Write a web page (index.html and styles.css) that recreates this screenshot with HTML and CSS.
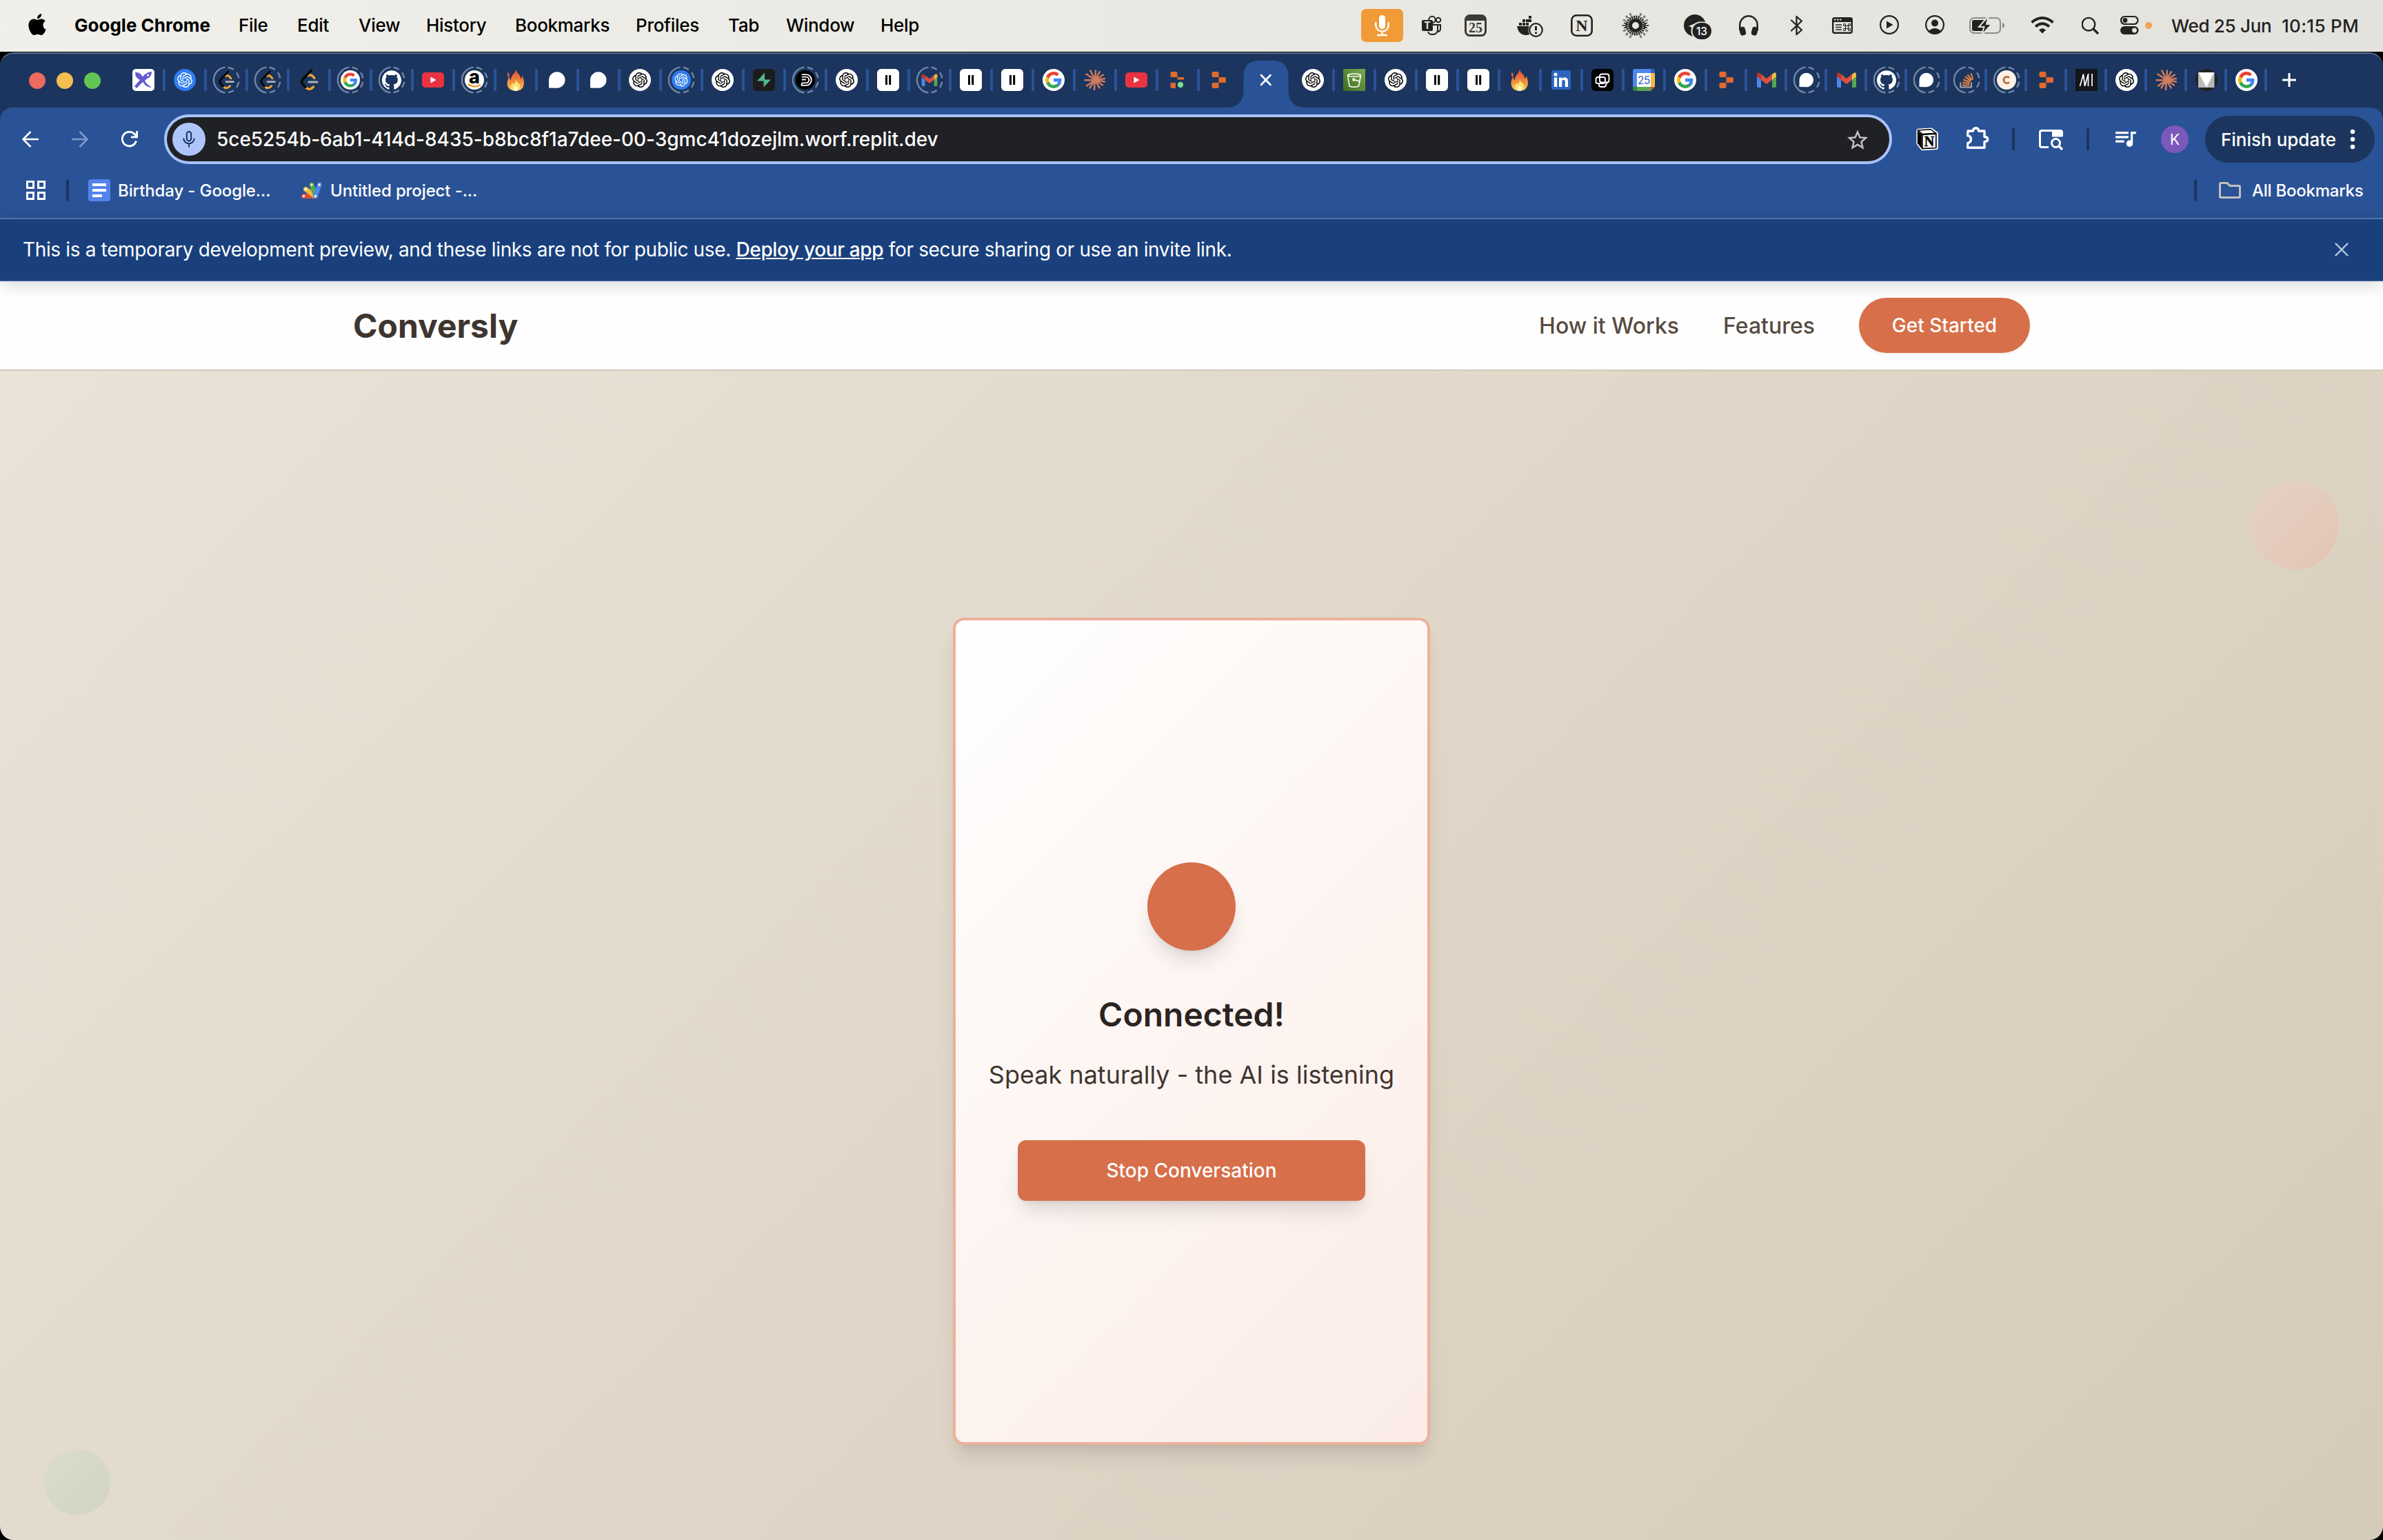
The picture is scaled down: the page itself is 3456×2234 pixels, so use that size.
FILE: index.html
```html
<!DOCTYPE html>
<html lang="en">
<head>
<meta charset="utf-8">
<title>Conversly</title>
<link rel="stylesheet" href="styles.css">
</head>
<body>
<svg class="sprite" width="0" height="0">
  <defs>
    <linearGradient id="flameFill" x1="0" y1="0" x2="0" y2="1"><stop offset="0" stop-color="#e2472e"/><stop offset=".55" stop-color="#ef8a3d"/><stop offset="1" stop-color="#fbd34f"/></linearGradient>
    <linearGradient id="bucketFill" x1="0" y1="1" x2="1" y2="0"><stop offset="0" stop-color="#3a6b22"/><stop offset="1" stop-color="#7aab4c"/></linearGradient>
  </defs>
  <symbol id="knot" viewBox="0 0 24 24"><path d="M22.2819 9.8211a5.9847 5.9847 0 0 0-.5157-4.9108 6.0462 6.0462 0 0 0-6.5098-2.9A6.0651 6.0651 0 0 0 4.9807 4.1818a5.9847 5.9847 0 0 0-3.9977 2.9 6.0462 6.0462 0 0 0 .7427 7.0966 5.98 5.98 0 0 0 .511 4.9107 6.051 6.051 0 0 0 6.5146 2.9001A5.9847 5.9847 0 0 0 13.2599 24a6.0557 6.0557 0 0 0 5.7718-4.2058 5.9894 5.9894 0 0 0 3.9977-2.9001 6.0557 6.0557 0 0 0-.7475-7.0729zm-9.022 12.6081a4.4755 4.4755 0 0 1-2.8764-1.0408l.1419-.0804 4.7783-2.7582a.7948.7948 0 0 0 .3927-.6813v-6.7369l2.02 1.1686a.071.071 0 0 1 .038.052v5.5826a4.504 4.504 0 0 1-4.4945 4.4944zm-9.6607-4.1254a4.4708 4.4708 0 0 1-.5346-3.0137l.142.0852 4.783 2.7582a.7712.7712 0 0 0 .7806 0l5.8428-3.3685v2.3324a.0804.0804 0 0 1-.0332.0615L9.74 19.9502a4.4992 4.4992 0 0 1-6.1408-1.6464zM2.3408 7.8956a4.485 4.485 0 0 1 2.3655-1.9728V11.6a.7664.7664 0 0 0 .3879.6765l5.8144 3.3543-2.0201 1.1685a.0757.0757 0 0 1-.071 0l-4.8303-2.7865A4.504 4.504 0 0 1 2.3408 7.872zm16.5963 3.8558L13.1038 8.364 15.1192 7.2a.0757.0757 0 0 1 .071 0l4.8303 2.7913a4.4944 4.4944 0 0 1-.6765 8.1042v-5.6772a.79.79 0 0 0-.407-.667zm2.0107-3.0231l-.142-.0852-4.7735-2.7818a.7759.7759 0 0 0-.7854 0L9.409 9.2297V6.8974a.0662.0662 0 0 1 .0284-.0615l4.8303-2.7866a4.4992 4.4992 0 0 1 6.6802 4.66zM8.3065 12.863l-2.02-1.1638a.0804.0804 0 0 1-.038-.0567V6.0742a4.4992 4.4992 0 0 1 7.3757-3.4537l-.142.0805L8.704 5.459a.7948.7948 0 0 0-.3927.6813zm1.0976-2.3654l2.602-1.4998 2.6069 1.4998v2.9994l-2.5974 1.4997-2.6067-1.4997Z"/></symbol>
  <symbol id="gpt" viewBox="0 0 32 32"><circle cx="16" cy="16" r="16" fill="#fff"/><use href="#knot" x="5" y="5" width="22" height="22" fill="#000"/></symbol>
  <symbol id="gptblue" viewBox="0 0 32 32"><circle cx="16" cy="16" r="16" fill="#2f7df0"/><use href="#knot" x="5" y="5" width="22" height="22" fill="#fff"/></symbol>
  <symbol id="ring" viewBox="0 0 40 40"><g fill="none" stroke="#6f86a8" stroke-width="2.4"><path d="M18.5 1.6A18.5 18.5 0 0 0 18.5 38.4"/><path pathLength="180" stroke-dasharray="0 9 27 18 27 18 27 18 27 9" d="M20 1.5A18.5 18.5 0 0 1 20 38.5"/></g></symbol>
  <symbol id="xlogo" viewBox="0 0 32 32"><rect width="32" height="32" rx="5" fill="#fff"/><path d="M4 5q8-1 11 7l2 5-11 11-3-3 8-9Q4 13 4 5zM28 4q0 8-8 11l-2 2q1 4 10 10-8 0-12-7l-3-5q1-4 5-7 5-4 10-4z" fill="#635bcf"/><circle cx="22.500" cy="9" r="1.500" fill="#fff"/></symbol>
  <symbol id="leet" viewBox="0 0 32 32"><path d="M15.500 9.500q3-2 6 1l2.500 2.800M11 26.500q5.500 6 11.500-.500" fill="none" stroke="#f0a32f" stroke-width="3.400" stroke-linecap="round"/><path d="M19.500 2 7.500 14.500q-4 4 0 8l3.500 3.800" fill="none" stroke="#080808" stroke-width="3.400" stroke-linecap="round"/><path d="M16 19H28" stroke="#b3b1b0" stroke-width="3.200" stroke-linecap="round"/></symbol>
  <symbol id="g" viewBox="0 0 24 24"><path fill="#4285f4" d="M22.560 12.250c0-.780-.070-1.530-.200-2.250H12v4.260h5.920c-.260 1.370-1.040 2.530-2.210 3.310v2.770h3.570c2.080-1.920 3.280-4.740 3.280-8.090z"/><path fill="#34a853" d="M12 23c2.970 0 5.460-.980 7.280-2.660l-3.570-2.770c-.980.660-2.230 1.060-3.710 1.060-2.860 0-5.290-1.930-6.160-4.530H2.180v2.840C3.990 20.530 7.700 23 12 23z"/><path fill="#fbbc05" d="M5.840 14.090c-.220-.660-.350-1.360-.350-2.090s.130-1.430.350-2.090V7.070H2.180C1.430 8.550 1 10.220 1 12s.430 3.450 1.180 4.930l2.850-2.220.810-.620z"/><path fill="#ea4335" d="M12 5.380c1.620 0 3.060.560 4.210 1.640l3.150-3.150C17.450 2.090 14.970 1 12 1 7.700 1 3.990 3.470 2.180 7.070l3.660 2.840c.870-2.600 3.300-4.530 6.160-4.530z"/></symbol>
  <symbol id="google" viewBox="0 0 32 32"><circle cx="16" cy="16" r="16" fill="#fff"/><use href="#g" x="3" y="3" width="26" height="26"/></symbol>
  <symbol id="github" viewBox="0 0 24 24"><path fill="#fff" d="M12 .297c-6.630 0-12 5.373-12 12 0 5.303 3.438 9.800 8.205 11.385.600.113.820-.258.820-.577 0-.285-.010-1.040-.015-2.040-3.338.724-4.042-1.610-4.042-1.610C4.422 18.070 3.633 17.700 3.633 17.700c-1.087-.744.084-.729.084-.729 1.205.084 1.838 1.236 1.838 1.236 1.070 1.835 2.809 1.305 3.495.998.108-.776.417-1.305.760-1.605-2.665-.300-5.466-1.332-5.466-5.930 0-1.310.465-2.380 1.235-3.220-.135-.303-.540-1.523.105-3.176 0 0 1.005-.322 3.300 1.230.960-.267 1.980-.399 3-.405 1.020.006 2.040.138 3 .405 2.280-1.552 3.285-1.230 3.285-1.230.645 1.653.240 2.873.120 3.176.765.840 1.230 1.910 1.230 3.220 0 4.610-2.805 5.625-5.475 5.920.420.360.810 1.096.810 2.220 0 1.606-.015 2.896-.015 3.286 0 .315.210.690.825.570C20.565 22.092 24 17.592 24 12.297c0-6.627-5.373-12-12-12"/></symbol>
  <symbol id="yt" viewBox="0 0 32 32"><rect y="5" width="32" height="22" rx="5" fill="#ea3340"/><path d="M12.500 11.500v9l8-4.500z" fill="#fff"/></symbol>
  <symbol id="flame" viewBox="0 0 32 32"><path d="M16 .500c1 6 8 8 7 14 2-1 2-3 2-5 5 8 5 22-9 22.500C2 31.500 1 19 7 11c0 3 0 4 2 5 0-7 6-9 7-15.500z" fill="url(#flameFill)"/><path d="M5 4.500q3 4 .500 8-3-4-.500-8z" fill="#e2603c"/><path d="M16 15c1 5 7 6 6 11-1 7-12 7-13 0 0-3 2-4 3-6 1 2 2 2 2 2 1-2 2-4 2-7z" fill="#fbe36f"/><path d="M16 24c5 4 3 8 0 8s-5-4 0-8z" fill="#fffbe0"/></symbol>
  <symbol id="bubble" viewBox="0 0 32 32"><path d="M4 27.500V16a11.750 11.750 0 1 1 11.750 11.750z" fill="#fff"/></symbol>
  <symbol id="supabase" viewBox="0 0 32 32"><rect width="32" height="32" rx="5" fill="#1c1c1e"/><path d="M17 5.500v10h9L15.500 26.500v-9H6z" fill="#4fb98a"/></symbol>
  <symbol id="dlogo" viewBox="0 0 32 32"><circle cx="16" cy="16" r="16" fill="#000"/><path d="M10 7h7a9 9 0 0 1 0 18h-7v-4M10 11h7a5 5 0 0 1 0 10h-7M10 15.500h7" fill="none" stroke="#fff" stroke-width="2.200"/></symbol>
  <symbol id="eleven" viewBox="0 0 32 32"><rect width="32" height="32" rx="6" fill="#fff"/><path d="M12 9h3v14h-3zM17.200 9h3v14h-3z" fill="#000"/></symbol>
  <symbol id="gmail" viewBox="0 0 32 32"><path d="M2 27V9l6 5v13H4q-2 0-2-2z" fill="#4f86ec"/><path d="M30 27V9l-6 5v13h4q2 0 2-2z" fill="#55a754"/><path d="M24 7.500 27 5.500q3-1 3 3V11l-6 5z" fill="#f1bc42"/><path d="M8 7.500l8 6.500 8-6.500V16l-8 6-8-6z" fill="#d9503f"/><path d="M8 7.500 5 5.500q-3-1-3 3V11l6 5z" fill="#b5352c"/></symbol>
  <symbol id="burst" viewBox="0 0 32 32"><g stroke="#cf7c5d" stroke-width="2.500" stroke-linecap="round"><path d="M16 16 9.500 2.500M16 16l1-13.500M16 16l7-12M16 16l12-7.500M16 16l14-2M16 16l14 2.500M16 16l11 7.500M16 16l6.500 11.500M16 16l-1 14M16 16 8.500 27.500M16 16 4 24.500M16 16l-14.500.300M16 16 3.500 7.500"/></g></symbol>
  <symbol id="replit" viewBox="0 0 32 32"><path d="M7.500 4h6a2 2 0 0 1 2 2v6h-8a2 2 0 0 1-2-2V6a2 2 0 0 1 2-2zM15.500 12H24a2 2 0 0 1 2 2v4a2 2 0 0 1-2 2h-8.500zM7.500 20h8v6a2 2 0 0 1-2 2h-6a2 2 0 0 1-2-2v-4a2 2 0 0 1 2-2z" fill="#e06a2c"/></symbol>
  <symbol id="replitlive" viewBox="0 0 32 32"><path d="M7.500 4h6a2 2 0 0 1 2 2v6h-8a2 2 0 0 1-2-2V6a2 2 0 0 1 2-2zM15.500 12H25v3.500h-9.500zM7.500 20h5.500v8H7.500a2 2 0 0 1-2-2v-4a2 2 0 0 1 2-2z" fill="#e06a2c"/><circle cx="20" cy="23" r="4.200" fill="#83dc8d"/></symbol>
  <symbol id="bucket" viewBox="0 0 32 32"><rect width="32" height="32" fill="url(#bucketFill)"/><g fill="none" stroke="#fff" stroke-width="1.600"><ellipse cx="16" cy="9" rx="9.500" ry="2"/><path d="M6.500 9 9 25q6.500 2.500 13.500 0L25.500 9M16 15.500l9 3"/><circle cx="15.300" cy="15.500" r="1.400"/></g></symbol>
  <symbol id="linkedin" viewBox="0 0 32 32"><rect x="2" y="2" width="28" height="28" rx="2" fill="#2b66bf"/><circle cx="8" cy="8" r="2.600" fill="#fff"/><path d="M5.900 12.500h4.300V26H5.900zM13 12.500h4V14.500c2-3.500 9-3 9 3V26h-4.200v-7.500c0-3.800-4.600-3.500-4.600 0V26H13z" fill="#fff"/></symbol>
  <symbol id="chain" viewBox="0 0 32 32"><rect width="32" height="32" rx="6" fill="#000"/><g fill="none" stroke="#fff" stroke-width="1.900"><rect x="12" y="7.500" width="13.500" height="12" rx="3"/><path d="M12 12H9.500a3 3 0 0 0-3 3v4.500L8 21h9a3 3 0 0 0 3-3v-4q0-2-3-2zM11 21v2.500q0 2.500 3 2.500h4q3 0 3-3l2-3.500"/></g></symbol>
  <symbol id="stack" viewBox="0 0 32 32"><path d="M6 20v8h18v-8" fill="none" stroke="#a7a9ac" stroke-width="2.200"/><path d="M9 24.500h12M9.300 20.300l12 1.500M10.500 15.500l11.300 4M13.500 10.500l9.800 7M17.500 7l7 9.500M23.500 5l3 10.500" stroke="#e8843a" stroke-width="2.400"/></symbol>
  <symbol id="cletter" viewBox="0 0 32 32"><circle cx="16" cy="16" r="16" fill="#fbf1e6"/><path d="M20.500 12.500a5.300 5.300 0 1 0 0 7" fill="none" stroke="#c1673a" stroke-width="3.200"/></symbol>
  <symbol id="mtab" viewBox="0 0 32 32"><rect width="32" height="32" fill="#14151c"/><path d="M6.500 25 11.500 7.500M11.500 7.500 13.500 25 18.500 7.500V25M18.500 7.500h1M24 7v18" fill="none" stroke="#fff" stroke-width="1.700"/></symbol>
  <symbol id="vtab" viewBox="0 0 32 32"><circle cx="16" cy="16" r="16" fill="#212225"/><rect x="4" y="5" width="23.500" height="22" fill="#b9b9bb"/><path d="M4.500 5h22.500L16 27z" fill="#fff"/></symbol>
</svg>

<header class="menubar">
  <nav class="menus">
    <svg class="apple" viewBox="2 0 20 24"><path d="M12.152 6.896c-.948 0-2.415-1.078-3.960-1.040-2.040.027-3.910 1.183-4.961 3.014-2.117 3.675-.546 9.103 1.519 12.090 1.013 1.454 2.208 3.090 3.792 3.039 1.520-.065 2.090-.987 3.935-.987 1.831 0 2.350.987 3.960.948 1.637-.026 2.676-1.480 3.676-2.948 1.156-1.688 1.636-3.325 1.662-3.415-.039-.013-3.182-1.221-3.220-4.857-.026-3.040 2.480-4.494 2.597-4.559-1.429-2.090-3.623-2.324-4.390-2.376-2-.156-3.675 1.090-4.610 1.090zM15.530 3.830c.843-1.012 1.400-2.427 1.245-3.830-1.207.052-2.662.805-3.532 1.818-.780.896-1.454 2.338-1.273 3.714 1.338.104 2.715-.688 3.559-1.701"/></svg>
    <b class="app-name">Google Chrome</b>
    <span>File</span><span>Edit</span><span>View</span><span>History</span><span>Bookmarks</span><span>Profiles</span><span>Tab</span><span>Window</span><span>Help</span>
  </nav>
  <div class="status">
    <svg width="61" height="74" viewBox="1974 0 61 74"><rect x="1974" y="13" width="61" height="48" rx="7" fill="#f19b38"/><rect x="2000" y="22" width="9" height="20" rx="4.500" fill="#fff"/><path d="M1995.300 33v3.500a9.200 9.200 0 0 0 18.400 0V33M2004.500 46v5M1998 51h13" fill="none" stroke="#fff" stroke-width="2.400" stroke-linecap="round"/></svg>
    <svg width="30" height="74" viewBox="2062 0 30 74"><g fill="none" stroke="#222" stroke-width="2"><circle cx="2077" cy="28.500" r="4.700"/><circle cx="2086" cy="29" r="3.300"/><path d="M2078 36h7v8q-1 6-8 6-5 0-6-4M2085 36h4v6q0 4-5 4"/></g><rect x="2062" y="29" width="16" height="16" rx="2" fill="#222"/><text x="2070" y="42" text-anchor="middle" class="glyph" font-size="14" font-weight="700" fill="#e9e8e2">T</text></svg>
    <svg width="32" height="74" viewBox="2124 0 32 74"><rect x="2125.500" y="22.500" width="29" height="29" rx="6" fill="none" stroke="#3b3b39" stroke-width="3"/><path d="M2126 30v-2q0-5 5-5h18q5 0 5 5v2z" fill="#3b3b39"/><text x="2140" y="47" text-anchor="middle" class="serif" font-size="20" font-weight="700" fill="#3b3b39">25</text></svg>
    <svg width="38" height="74" viewBox="2200 0 38 74"><path d="M2200 38h18q-2 6 3 11-12 5-18-3-2-3-3-8zM2203 33h4v4h-4zM2208 33h4v4h-4zM2213 33h4v4h-4zM2208 28h4v4h-4zM2213 28h4v4h-4zM2217 23h4v4h-4zM2217 28h4v4h-4z" fill="#222"/><circle cx="2227.500" cy="43.500" r="11" fill="#e8e7e1"/><circle cx="2227.500" cy="43.500" r="9.300" fill="none" stroke="#222" stroke-width="2.200"/><path d="M2227.500 38v6M2227.500 46.500v2.500" stroke="#222" stroke-width="3"/></svg>
    <svg width="32" height="74" viewBox="2278 0 32 74"><rect x="2279.300" y="22.300" width="29.400" height="29.400" rx="7" fill="none" stroke="#222" stroke-width="2.600"/><text x="2294" y="45" text-anchor="middle" class="serif" font-size="24" font-weight="700" fill="#222">N</text></svg>
    <svg width="40" height="74" viewBox="2352 0 40 74"><circle cx="2372" cy="37" r="7.500" fill="none" stroke="#222" stroke-width="5"/><circle cx="2372" cy="37" r="12" fill="none" stroke="#222" stroke-width="5" stroke-dasharray="2 1.140"/><path d="M2352.500 37h7M2384.500 37h7M2355 33.500l5 .800M2389 33.500l-5 .800M2355 40.500l5-.800M2389 40.500l-5-.800" stroke="#222" stroke-width="1.700"/><circle cx="2372" cy="37" r="17.500" fill="none" stroke="#83827e" stroke-width="4.500" pathLength="36" stroke-dasharray="1 1 1 1 1 4" stroke-dashoffset="-2"/></svg>
    <svg width="42" height="74" viewBox="2442 0 42 74"><circle cx="2458" cy="37" r="16" fill="#222"/><path d="M2449 38l16-7-3 8-8 1z" fill="#e6e5df"/><rect x="2452.500" y="31.500" width="31" height="27" rx="13.500" fill="#e6e5df"/><rect x="2454.500" y="33" width="27.500" height="24" rx="12" fill="#222"/><text x="2468" y="50.500" text-anchor="middle" class="glyph" font-size="15.500" font-weight="500" fill="#fff">13</text></svg>
    <svg width="28" height="74" viewBox="2522 0 28 74"><path d="M2523.300 44v-8a12.700 12.700 0 0 1 25.400 0v8" fill="none" stroke="#222" stroke-width="2.500"/><rect x="2523" y="39" width="8.500" height="12.500" rx="4" transform="rotate(-14 2527 45)" fill="#222"/><rect x="2540.500" y="39" width="8.500" height="12.500" rx="4" transform="rotate(14 2545 45)" fill="#222"/></svg>
    <svg width="18" height="74" viewBox="2597 0 18 74"><path d="M2598 29.500l15 14-7.500 6.500V24l7.500 6.500-15 14" fill="none" stroke="#222" stroke-width="2.300" stroke-linejoin="round" stroke-linecap="round"/></svg>
    <svg width="30" height="74" viewBox="2657 0 30 74"><rect x="2658.200" y="26.200" width="27.600" height="21.600" rx="2.500" fill="none" stroke="#222" stroke-width="2.400"/><path d="M2658 26h28v6h-28z" fill="#222"/><path d="M2660 28.500h2.500m1.500 0h2.500m1.500 0h2.500" stroke="#e5e4de" stroke-width="2"/><path d="M2662 36h9M2662 39.500h9M2662 43h9" stroke="#222" stroke-width="1.500"/><path d="M2676.500 37.500h4v4h-4zm0 0h-1.500a1.500 1.500 0 1 1 1.500-1.500zm4 0h1.500a1.500 1.500 0 1 0-1.500-1.500zm-4 4h-1.500a1.500 1.500 0 1 0 1.500 1.500zm4 0h1.500a1.500 1.500 0 1 1-1.500 1.500z" fill="none" stroke="#222" stroke-width="1.200"/></svg>
    <svg width="28" height="74" viewBox="2726 0 28 74"><circle cx="2740" cy="36" r="12.900" fill="none" stroke="#222" stroke-width="2.200"/><path d="M2736 30.500v11l9.500-5.500z" fill="#222"/></svg>
    <svg width="28" height="74" viewBox="2792 0 28 74"><circle cx="2806" cy="36" r="12.900" fill="none" stroke="#222" stroke-width="2.200"/><circle cx="2806" cy="33.500" r="5" fill="#222"/><path d="M2797 45q9-8 18 0-3 4-9 4t-9-4z" fill="#222"/></svg>
    <svg width="52" height="74" viewBox="2856 0 52 74"><rect x="2857" y="26" width="44" height="22" rx="6" fill="none" stroke="#8c8b86" stroke-width="2"/><path d="M2904 33v8q3-1 3-4t-3-4z" fill="#8c8b86"/><rect x="2860" y="29" width="20" height="16" rx="3" fill="#222"/><path d="M2884 23l-14 16h7.500l-3.500 12 14.500-16h-7.500z" fill="#222" stroke="#e4e3dd" stroke-width="2"/></svg>
    <svg width="36" height="74" viewBox="2945 0 36 74"><path d="M2946.500 32.500q15.500-13 31 0M2952 38.500q10-8.500 20 0" fill="none" stroke="#222" stroke-width="4"/><path d="M2957 43.500q5-4.500 10 0l-5 5z" fill="#222"/></svg>
    <svg width="27" height="74" viewBox="3019 0 27 74"><circle cx="3029" cy="35.200" r="9.300" fill="none" stroke="#222" stroke-width="2.400"/><path d="M3036 42l7 7" stroke="#222" stroke-width="3.200"/></svg>
    <svg width="27" height="74" viewBox="3075 0 27 74"><rect x="3076" y="24" width="24.500" height="11" rx="5.500" fill="none" stroke="#222" stroke-width="2.200"/><circle cx="3082" cy="29.500" r="3.400" fill="#222"/><rect x="3075" y="38" width="26.500" height="12" rx="6" fill="#222"/><circle cx="3095.500" cy="44" r="3.400" fill="#e4e3dd"/></svg>
    <i class="mic-dot"></i>
    <span class="date">Wed 25 Jun</span>
    <span class="time">10:15 PM</span>
  </div>
</header>

<main class="window">
  <div class="tabstrip">
    <div class="lights"><i class="close"></i><i class="min"></i><i class="max"></i></div>
    <div class="tab"><svg class="fav"><use href="#xlogo"/></svg></div>
    <div class="tab"><svg class="fav"><use href="#gptblue"/></svg></div>
    <div class="tab"><svg class="ringed"><use href="#ring"/><use href="#leet" x="6" y="6" width="28" height="28"/></svg></div>
    <div class="tab"><svg class="ringed"><use href="#ring"/><use href="#leet" x="6" y="6" width="28" height="28"/></svg></div>
    <div class="tab"><svg class="fav"><use href="#leet"/></svg></div>
    <div class="tab"><svg class="ringed"><use href="#ring"/><use href="#google" x="6" y="6" width="28" height="28"/></svg></div>
    <div class="tab"><svg class="ringed"><use href="#ring"/><use href="#github" x="6" y="6" width="28" height="28"/></svg></div>
    <div class="tab"><svg class="fav"><use href="#yt"/></svg></div>
    <div class="tab"><svg class="ringed" viewBox="0 0 40 40"><use href="#ring"/><circle cx="20" cy="20" r="14" fill="#fff"/><text x="20" y="25" text-anchor="middle" class="glyph" font-size="27" font-weight="800">a</text><path d="M10.500 26q9.500 6.500 18.500 1" fill="none" stroke="#f29a2e" stroke-width="2.200"/></svg></div>
    <div class="tab"><svg class="fav"><use href="#flame"/></svg></div>
    <div class="tab"><svg class="fav"><use href="#bubble"/></svg></div>
    <div class="tab"><svg class="fav"><use href="#bubble"/></svg></div>
    <div class="tab"><svg class="fav"><use href="#gpt"/></svg></div>
    <div class="tab"><svg class="ringed"><use href="#ring"/><use href="#gptblue" x="6" y="6" width="28" height="28"/></svg></div>
    <div class="tab"><svg class="fav"><use href="#gpt"/></svg></div>
    <div class="tab"><svg class="fav"><use href="#supabase"/></svg></div>
    <div class="tab"><svg class="ringed"><use href="#ring"/><use href="#dlogo" x="6" y="6" width="28" height="28"/></svg></div>
    <div class="tab"><svg class="fav"><use href="#gpt"/></svg></div>
    <div class="tab"><svg class="fav"><use href="#eleven"/></svg></div>
    <div class="tab"><svg class="ringed"><use href="#ring"/><use href="#gmail" x="7" y="7" width="26" height="26"/></svg></div>
    <div class="tab"><svg class="fav"><use href="#eleven"/></svg></div>
    <div class="tab"><svg class="fav"><use href="#eleven"/></svg></div>
    <div class="tab"><svg class="fav"><use href="#google"/></svg></div>
    <div class="tab"><svg class="fav"><use href="#burst"/></svg></div>
    <div class="tab"><svg class="fav"><use href="#yt"/></svg></div>
    <div class="tab"><svg class="fav"><use href="#replitlive"/></svg></div>
    <div class="tab bare"><svg class="fav"><use href="#replit"/></svg></div>
    <div class="tab-active"><svg viewBox="0 0 110 68" width="110" height="68"><path d="M0 68Q22 66 22.500 44V22Q23 0 45 0h20Q87 0 87.500 22v22Q88 66 110 68z" fill="#2a5296"/><path d="M48 21l13.500 14M61.500 21 48 35" stroke="#fff" stroke-width="2.600" stroke-linecap="round"/></svg></div>
    <div class="tab"><svg class="fav"><use href="#gpt"/></svg></div>
    <div class="tab"><svg class="fav"><use href="#bucket"/></svg></div>
    <div class="tab"><svg class="fav"><use href="#gpt"/></svg></div>
    <div class="tab"><svg class="fav"><use href="#eleven"/></svg></div>
    <div class="tab"><svg class="fav"><use href="#eleven"/></svg></div>
    <div class="tab"><svg class="fav"><use href="#flame"/></svg></div>
    <div class="tab"><svg class="fav"><use href="#linkedin"/></svg></div>
    <div class="tab"><svg class="fav"><use href="#chain"/></svg></div>
    <div class="tab"><svg class="fav" viewBox="0 0 32 32"><path d="M0 6V3q0-3 3-3h23v6z" fill="#4f86ec"/><path d="M0 6h6v20H0z" fill="#4f86ec"/><path d="M26 0h3q3 0 3 3v3h-6z" fill="#2e62c9"/><path d="M26 6h6v20h-6z" fill="#f1bc42"/><path d="M6 26h20v6H6z" fill="#55a754"/><path d="M0 26h6v6H3q-3 0-3-3z" fill="#38803b"/><path d="M26 26h6l-6 6z" fill="#d9503f"/><path d="M6 6h20v20H6z" fill="#fff"/><text x="16" y="21.500" text-anchor="middle" class="glyph" font-size="15.500" fill="#2e62c9" letter-spacing="-.5">25</text></svg></div>
    <div class="tab"><svg class="fav"><use href="#google"/></svg></div>
    <div class="tab slim"><svg class="fav"><use href="#replit"/></svg></div>
    <div class="tab slim"><svg class="fav"><use href="#gmail"/></svg></div>
    <div class="tab slim"><svg class="ringed"><use href="#ring"/><use href="#bubble" x="6" y="6" width="28" height="28"/></svg></div>
    <div class="tab slim"><svg class="fav"><use href="#gmail"/></svg></div>
    <div class="tab slim"><svg class="ringed"><use href="#ring"/><use href="#github" x="6" y="6" width="28" height="28"/></svg></div>
    <div class="tab slim"><svg class="ringed"><use href="#ring"/><use href="#bubble" x="6" y="6" width="28" height="28"/></svg></div>
    <div class="tab slim"><svg class="ringed"><use href="#ring"/><use href="#stack" x="6" y="6" width="28" height="28"/></svg></div>
    <div class="tab slim"><svg class="ringed"><use href="#ring"/><use href="#cletter" x="6" y="6" width="28" height="28"/></svg></div>
    <div class="tab slim"><svg class="fav"><use href="#replit"/></svg></div>
    <div class="tab slim"><svg class="fav"><use href="#mtab"/></svg></div>
    <div class="tab slim"><svg class="fav"><use href="#gpt"/></svg></div>
    <div class="tab slim"><svg class="fav"><use href="#burst"/></svg></div>
    <div class="tab slim"><svg class="fav"><use href="#vtab"/></svg></div>
    <div class="tab slim"><svg class="fav"><use href="#google"/></svg></div>
    <svg class="new-tab" width="20" height="20" viewBox="0 0 20 20"><path d="M10 0v20M0 10h20" stroke="#fff" stroke-width="3"/></svg>
  </div>

  <div class="chrome">
    <div class="toolbar">
      <svg class="nav-icon" viewBox="0 0 24 24"><path d="M24 12H2M12.500 1 1.500 12l11 11" fill="none" stroke="#fff" stroke-width="2.600"/></svg>
      <svg class="nav-icon" viewBox="0 0 24 24"><path d="M0 12h22M11.500 1l11 11-11 11" fill="none" stroke="#7f9ac6" stroke-width="2.600"/></svg>
      <svg class="nav-icon" viewBox="0 0 24 24"><path d="M21.500 14.500A10.300 10.300 0 1 1 19.500 5L22.500 8.500M22.600 0v8.800H14" fill="none" stroke="#fff" stroke-width="2.800"/></svg>
      <div class="omnibox">
        <div class="site-mic"><svg width="18" height="24" viewBox="0 0 18 24"><rect x="5.800" y="1" width="6.400" height="13.500" rx="3.200" fill="none" stroke="#1b355e" stroke-width="2"/><path d="M1.200 10.500a7.800 7.800 0 0 0 15.600 0M9 18v5.500" fill="none" stroke="#1b355e" stroke-width="2"/></svg></div>
        <span class="url">5ce5254b-6ab1-414d-8435-b8bc8f1a7dee-00-3gmc41dozejlm.worf.replit.dev</span>
        <svg class="star" viewBox="2 2 20 19"><path fill="#c4c4c4" d="M22 9.240l-7.190-.620L12 2 9.190 8.630 2 9.240l5.460 4.730L5.820 21 12 17.270 18.180 21l-1.630-7.030L22 9.240zM12 15.400l-3.760 2.270 1-4.280-3.320-2.880 4.380-.380L12 6.100l1.710 4.040 4.380.380-3.320 2.880 1 4.280L12 15.400z"/></svg>
      </div>
      <div class="extensions">
        <svg width="32" height="92" viewBox="2779 156 32 92"><path d="M2779.300 189q0-2 2-2.200l19-1.200q1.500 0 2.500.800l7 5q1 .800 1 2v21.500q0 2-2 2.200l-20.500 1.200q-1.500 0-2.500-1.200l-5.500-7q-1-1-1-2.500z" fill="#fff"/><path d="M2780.800 190v18l6 7.500v-21z"/><path d="M2781.500 189l18.500-1.300 7.500 5.500-19.500 1.300z" fill="#fff" stroke="#000" stroke-width="1.500"/><path d="M2787.800 195.300l20-1.200v20.400l-20 1.200z" fill="#fff" stroke="#000" stroke-width="1.700"/><text x="2797.900" y="212" text-anchor="middle" class="serif" font-size="20" font-weight="700" stroke="#000" stroke-width=".6">N</text></svg>
        <svg width="34" height="92" viewBox="2852 156 34 92"><path d="M2854 190h7.500q0-4 4-4.200 4 .200 4 4.200h8.500v8.500q4.700 0 4.700 3.500t-4.700 3.500V214.300h-24.500v-6.500q5-1.500 5-5.800t-5-5.500z" fill="none" stroke="#fff" stroke-width="3.400" stroke-linejoin="round"/></svg>
        <i class="divider"></i>
        <svg width="36" height="92" viewBox="2957 156 36 92"><path d="M2971 213.500h-10q-2.500 0-2.500-2.500v-19q0-2.500 2.500-2.500h27q2.500 0 2.500 2.500v6" fill="none" stroke="#fff" stroke-width="3"/><path d="M2976 189h15v9.500h-15z" fill="#fff"/><circle cx="2981.500" cy="207.500" r="6" fill="none" stroke="#fff" stroke-width="3"/><path d="M2985.500 211.500l5.500 5.500" stroke="#fff" stroke-width="3.400"/></svg>
        <i class="divider"></i>
        <svg width="30" height="22" viewBox="3 6 19 14"><path fill="#fff" d="M15 6H3v2h12V6zm0 4H3v2h12v-2zM3 16h8v-2H3v2zM17 6v8.180c-.310-.110-.650-.180-1-.180-1.660 0-3 1.340-3 3s1.340 3 3 3 3-1.340 3-3V8h3V6h-5z"/></svg>
        <span class="avatar">K</span>
        <div class="update"><span>Finish update</span><svg width="8" height="30" viewBox="0 0 8 30"><g fill="#fff"><circle cx="4" cy="4" r="3.300"/><circle cx="4" cy="15" r="3.300"/><circle cx="4" cy="26" r="3.300"/></g></svg></div>
      </div>
    </div>
    <div class="bookmarks">
      <svg width="28" height="28" viewBox="0 0 28 28"><g fill="none" stroke="#fff" stroke-width="3"><path d="M1.500 1.500h9v9h-9zM17.500 1.500h9v9h-9zM1.500 17.500h9v9h-9zM17.500 17.500h9v9h-9z"/></g></svg>
      <i class="divider"></i>
      <svg width="32" height="32" viewBox="0 0 32 32"><rect width="32" height="32" rx="4" fill="#5383ec"/><path d="M6 8h20M6 16h20M6 24h14" stroke="#fff" stroke-width="4"/></svg>
      <span class="bm-one">Birthday - Google...</span>
      <svg width="30" height="24" viewBox="0 0 30 24"><path d="M3.500 20.500h17" stroke="#d9503f" stroke-width="7" stroke-linecap="round"/><path d="M6.500 10.500 20 20.500" stroke="#f1bc42" stroke-width="7" stroke-linecap="round"/><path d="M15 4l6 16" stroke="#55a754" stroke-width="7" stroke-linecap="round"/><path d="M26.500 3.500l-6 17" stroke="#4f86ec" stroke-width="6.500" stroke-linecap="round"/><g fill="#fff"><circle cx="3.500" cy="20.500" r="1.700"/><circle cx="6.500" cy="10.500" r="1.700"/><circle cx="15" cy="4" r="1.700"/><circle cx="26" cy="4" r="1.700"/><circle cx="20.500" cy="20.500" r="1.700"/></g></svg>
      <span class="bm-two">Untitled project -...</span>
      <i class="divider end"></i>
      <svg width="32" height="24" viewBox="0 0 32 24"><path d="M1.500 3q0-1.500 1.500-1.500h9l4 4h13q1.500 0 1.500 1.500v14q0 1.500-1.500 1.500H3q-1.500 0-1.500-1.500z" fill="none" stroke="#c0c0c0" stroke-width="3"/></svg>
      <span class="bm-all">All Bookmarks</span>
    </div>
  </div>

  <div class="notice">
    <p>This is a temporary development preview, and these links are not for public use. <a>Deploy your app</a> for secure sharing or use an invite link.</p>
    <svg width="20" height="20" viewBox="0 0 20 20"><path d="M1.500 1.500l17 17M18.500 1.500l-17 17" stroke="#bccae0" stroke-width="2.400" stroke-linecap="round"/></svg>
  </div>

  <div class="site-nav">
    <span class="brand">Conversly</span>
    <div class="links"><span>How it Works</span><span>Features</span><button class="cta">Get Started</button></div>
  </div>

  <section class="hero">
    <i class="blob pink"></i><i class="blob green"></i>
    <div class="card">
      <i class="orb"></i>
      <h1>Connected!</h1>
      <p>Speak naturally - the AI is listening</p>
      <button class="stop">Stop Conversation</button>
    </div>
  </section>
</main>
</body>
</html>
```
FILE: styles.css
```css
* { box-sizing: border-box; }
html, body { height: 100%; }
body {
  margin: 0;
  width: 3456px;
  height: 2234px;
  overflow: hidden;
  background: #000;
  font-family: Inter, "Liberation Sans", sans-serif;
  display: flex;
  flex-direction: column;
}
svg { display: block; flex: none; }
i { display: block; flex: none; }
.sprite { position: absolute; }
.glyph { font-family: Inter, sans-serif; }
.serif { font-family: "Liberation Serif", serif; }

.menubar {
  height: 76px;
  padding-bottom: 1px;
  flex: none;
  display: flex;
  justify-content: space-between;
  background: linear-gradient(90deg, #f0efe9, #e3e2dc);
  border-bottom: 1px solid #000;
}
.menus {
  display: grid;
  grid-template-columns: 67px 238px 85px 89px 98px 129px 175px 134px 84px 137px 80px;
  align-items: center;
  padding: 0 0 1px 41px;
  font-size: 26px;
  font-weight: 500;
  letter-spacing: -.3px;
  color: #000;
  white-space: nowrap;
}
.apple { width: 26px; height: 31px; margin-top: -3px; }
.app-name { font-weight: 700; letter-spacing: 0; }
.status {
  display: grid;
  grid-template-columns: 88px 62px 76px 78px 74px 90px 80px 75px 60px 69px 66px 64px 89px 74px 56px 36px 38px 160px 147px;
  align-items: center;
  font-size: 26px;
  font-weight: 500;
  color: #222;
  white-space: nowrap;
}
.date { letter-spacing: -.3px; }
.time { letter-spacing: .3px; }
.mic-dot { width: 10px; height: 10px; border-radius: 50%; background: #f1a451; }

.window {
  flex: 1;
  display: flex;
  flex-direction: column;
  border-radius: 20px;
  overflow: hidden;
  background: #1b355e;
  border-top: 2px solid #5a7096;
}
.tabstrip { height: 78px; flex: none; display: flex; align-items: center; padding-bottom: 2px; }
.lights { display: flex; gap: 16px; width: 180px; padding: 2px 0 0 42px; }
.lights i { width: 24px; height: 24px; border-radius: 50%; }
.close { background: #ec6a5e; }
.min { background: #f4bf4f; }
.max { background: #61c554; }
.tab {
  width: 60px;
  height: 32px;
  display: flex;
  align-items: center;
  justify-content: center;
  border-right: 4px solid #2a5296;
  flex: none;
}
.tab.slim { width: 58px; padding-left: 2px; }
.tab.bare { border-color: transparent; }
.fav { width: 32px; height: 32px; }
.ringed { width: 40px; height: 40px; margin: 0 -2px; }
.tab-active { width: 76px; height: 68px; flex: none; margin-top: 12px; padding-right: 4px; display: flex; justify-content: center; position: relative; z-index: 1; }
.tab-active svg { margin: 0 -20px; }
.new-tab { margin-left: 22px; }

.chrome { background: #2a5296; border-radius: 18px 18px 0 0; height: 160px; flex: none; }
.toolbar { height: 92px; display: flex; align-items: center; padding-left: 32px; }
.nav-icon { width: 24px; height: 24px; margin-right: 48px; }
.omnibox {
  width: 2506px;
  height: 72px;
  margin-left: -10px;
  border: 4px solid #a8c2fa;
  border-radius: 36px;
  background: #202124;
  display: flex;
  align-items: center;
  padding: 0 31px 0 8px;
  color: #fff;
  flex: none;
}
.site-mic { width: 48px; height: 48px; border-radius: 50%; background: #aec5fa; display: grid; place-items: center; flex: none; }
.url { font-size: 28px; font-weight: 500; letter-spacing: -.04px; margin-left: 16px; white-space: nowrap; flex: 1; }
.star { width: 30px; height: 29px; }
.extensions { display: flex; align-items: center; padding-left: 35px; }
.divider { width: 4px; height: 32px; border-radius: 2px; background: #1b355e; }
.extensions > :nth-child(2) { margin-left: 41px; }
.extensions > :nth-child(3) { margin-left: 32px; }
.extensions > :nth-child(4) { margin-left: 35px; }
.extensions > :nth-child(5) { margin-left: 33px; }
.extensions > :nth-child(6) { margin-left: 38px; }
.avatar { width: 40px; height: 40px; margin-left: 36px; border-radius: 50%; background: #7b59bb; color: #fff; font-size: 21px; display: grid; place-items: center; }
.update { width: 246px; height: 68px; margin-left: 24px; border-radius: 34px; background: #1b355e; color: #fff; font-size: 26px; font-weight: 500; display: flex; align-items: center; justify-content: space-between; padding: 0 28px 0 23px; white-space: nowrap; }
.bookmarks { height: 56px; display: flex; align-items: center; padding: 0 30px 0 38px; color: #fff; font-size: 24px; font-weight: 500; letter-spacing: -.12px; white-space: nowrap; }
.bookmarks > :nth-child(2) { margin-left: 30px; }
.bookmarks > :nth-child(3) { margin-left: 28px; }
.bm-one { margin-left: 11px; width: 266px; }
.bm-two { margin-left: 12px; }
.bookmarks .end { margin-left: auto; margin-right: 32px; }
.bm-all { margin-left: 16px; width: 160px; letter-spacing: -.25px; }

.notice {
  height: 92px;
  flex: none;
  display: flex;
  align-items: center;
  justify-content: space-between;
  padding: 0 50px 0 33px;
  background: #19407d;
  border-top: 2px solid #4f74ac;
  border-bottom: 2px solid #2c5190;
  color: #fff;
  font-size: 28px;
  letter-spacing: -.35px;
  box-shadow: 0 4px 24px rgba(0, 0, 0, .16);
  position: relative;
}
.notice p { margin: 0; white-space: nowrap; }
.notice a { text-decoration: underline; font-weight: 500; }

.site-nav {
  height: 130px;
  flex: none;
  display: flex;
  align-items: center;
  justify-content: space-between;
  padding: 0 512px;
  background: #fefefe;
  border-bottom: 2px solid #d3c9b9;
}
.brand { font-size: 48px; font-weight: 700; color: #3e352e; }
.links { display: flex; align-items: center; gap: 64px; font-size: 32px; font-weight: 500; color: #574b40; white-space: nowrap; }
button { border: 0; font-family: inherit; font-size: 28px; font-weight: 500; color: #fff; background: #d76f4a; }
.cta { width: 248px; height: 80px; border-radius: 40px; box-shadow: 0 2px 4px rgba(0, 0, 0, .06); }

.hero {
  flex: 1;
  position: relative;
  display: flex;
  justify-content: center;
  padding-top: 358px;
  background: linear-gradient(135deg, #e9e3d8, #e0d7c8 50%, #d5cbba);
}
.blob { position: absolute; border-radius: 50%; }
.pink { left: 3264px; top: 160px; width: 128px; height: 128px; background: linear-gradient(135deg, #e5d2c5, #e4c4b4); }
.green { left: 64px; top: 1564px; width: 96px; height: 96px; background: linear-gradient(135deg, #dbddcd, #d2d4c1); }
.card {
  width: 692px;
  height: 1200px;
  border: 4px solid #edb19b;
  border-radius: 16px;
  background: linear-gradient(135deg, #fff, #fdf5f2 50%, #fbece7);
  box-shadow: 0 20px 30px -6px rgba(0, 0, 0, .12), 0 8px 12px -8px rgba(0, 0, 0, .1);
  display: flex;
  flex-direction: column;
  align-items: center;
  padding-top: 351px;
}
.orb { width: 128px; height: 128px; border-radius: 50%; background: #d76f4a; box-shadow: 0 20px 30px -6px rgba(0, 0, 0, .12), 0 8px 12px -8px rgba(0, 0, 0, .1); }
h1 { margin: 61px 0 0; font-size: 48px; line-height: 64px; font-weight: 600; color: #2b2422; }
.card p { margin: 27px 0 0; font-size: 36px; line-height: 56px; color: #41362f; white-space: nowrap; }
.stop { width: 504px; height: 88px; margin-top: 67px; border-radius: 12px; box-shadow: 0 20px 30px -6px rgba(0, 0, 0, .12), 0 8px 12px -8px rgba(0, 0, 0, .1); }
```
